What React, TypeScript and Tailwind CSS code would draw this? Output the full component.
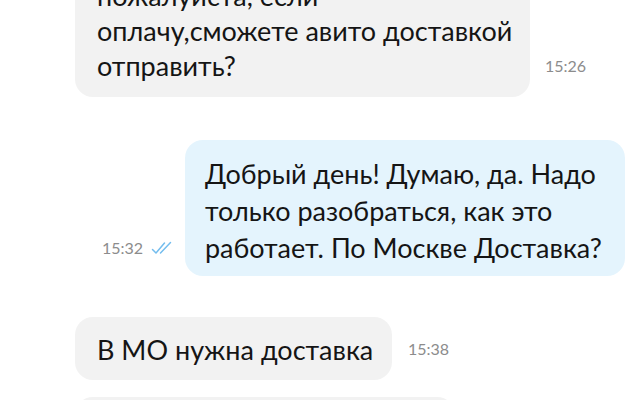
import React from "react";

type Message = {
  id: number;
  own: boolean;
  lines: string[];
  time: string;
  read?: boolean;
};

const MESSAGES: Message[] = [
  {
    id: 1,
    own: false,
    lines: ["Здравствуйте, скажите,", "пожалуйста, если", "оплачу,сможете авито доставкой", "отправить?"],
    time: "15:26",
  },
  {
    id: 2,
    own: true,
    lines: ["Добрый день! Думаю, да. Надо", "только разобраться, как это", "работает. По Москве Доставка?"],
    time: "15:32",
    read: true,
  },
  {
    id: 3,
    own: false,
    lines: ["В МО нужна доставка"],
    time: "15:38",
  },
];

const ReadMark: React.FC = () => (
  <svg width="24" height="14" viewBox="0 0 24 14" fill="none" className="text-[#74bdee]">
    <path d="M1.5 8.5 L5 12 L13.5 2" stroke="currentColor" strokeWidth="1.5" strokeLinecap="round" strokeLinejoin="round" />
    <path d="M9.5 12 L19.5 1.5" stroke="currentColor" strokeWidth="1.5" strokeLinecap="round" />
  </svg>
);

const Time: React.FC<{ value: string }> = ({ value }) => (
  <span className="text-[16px] leading-none text-[#8c8c8c]">{value}</span>
);

const App: React.FC = () => {
  return (
    <div
      className="h-[400px] w-[640px] overflow-hidden bg-white"
      style={{ fontFamily: "Lato, 'Noto Sans', sans-serif" }}
    >
      <div className="-mt-[69px] flex flex-col">
        {/* incoming */}
        <div className="flex items-end gap-[15px] pl-[75px]">
          <div className="w-[455px] whitespace-nowrap rounded-[18px] bg-[#f2f2f2] pb-[14px] pl-[22px] pt-[12px] text-[27px] leading-[35px] text-[#151515]">
            {MESSAGES[0].lines.map((l, i) => (
              <div key={i}>{l}</div>
            ))}
          </div>
          <div className="mb-[19px]">
            <Time value={MESSAGES[0].time} />
          </div>
        </div>

        {/* outgoing */}
        <div className="mt-[43px] flex items-end justify-end gap-[10px] pr-[15px]">
          <div className="mb-[20px] flex items-center gap-[8px]">
            <Time value={MESSAGES[1].time} />
            <ReadMark />
          </div>
          <div className="w-[440px] whitespace-nowrap rounded-[18px] bg-[#e4f4fd] pb-[10px] pl-[20px] pt-[15px] text-[27px] leading-[37px] text-[#151515]">
            {MESSAGES[1].lines.map((l, i) => (
              <div key={i}>{l}</div>
            ))}
          </div>
        </div>

        {/* incoming */}
        <div className="mt-[41px] flex items-end gap-[16px] pl-[75px]">
          <div className="w-[317px] whitespace-nowrap rounded-[18px] bg-[#f2f2f2] pb-[13px] pl-[22px] pt-[15px] text-[27px] leading-[35px] text-[#151515]">
            {MESSAGES[2].lines[0]}
          </div>
          <div className="mb-[19px]">
            <Time value={MESSAGES[2].time} />
          </div>
        </div>

        <div className="mt-[17px] pl-[75px]">
          <div className="h-[60px] w-[380px] rounded-[18px] bg-[#f2f2f2]" />
        </div>
      </div>
    </div>
  );
};

export default App;
